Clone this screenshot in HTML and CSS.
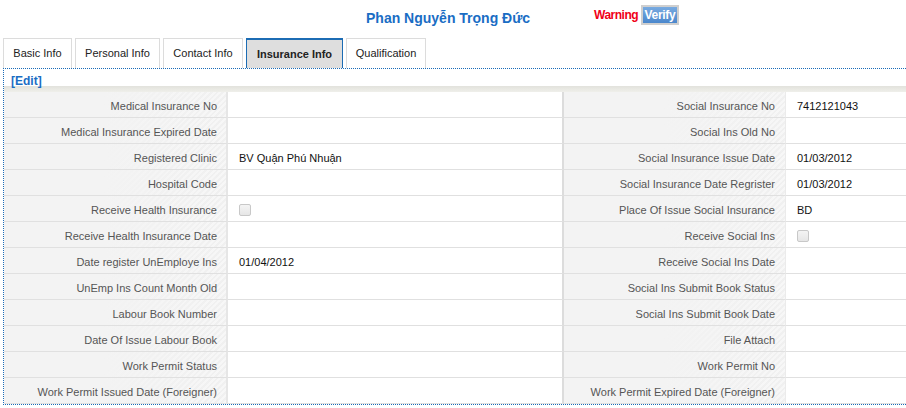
FILE: index.html
```html
<!DOCTYPE html>
<html>
<head>
<meta charset="utf-8">
<link rel="stylesheet" href="styles.css">
</head>
<body>
<div class="header">
  <div class="title">Phan Nguyễn Trọng Đức</div>
  <div class="warn">Warning</div>
  <div class="verify">Verify</div>
</div>
<div class="tabs">
  <div class="tab t-basic">Basic Info</div>
  <div class="tab t-personal">Personal Info</div>
  <div class="tab t-contact">Contact Info</div>
  <div class="tab t-insurance active">Insurance Info</div>
  <div class="tab t-qual">Qualification</div>
</div>
<div class="panel">
  <div class="edit">[Edit]</div>
  <div class="bar"></div>
  <div class="grid">
    <div class="lbl">Medical Insurance No</div><div class="val v1"></div><div class="lbl l2">Social Insurance No</div><div class="val">7412121043</div>
    <div class="lbl">Medical Insurance Expired Date</div><div class="val v1"></div><div class="lbl l2">Social Ins Old No</div><div class="val"></div>
    <div class="lbl">Registered Clinic</div><div class="val v1">BV Quận Phú Nhuận</div><div class="lbl l2">Social Insurance Issue Date</div><div class="val">01/03/2012</div>
    <div class="lbl">Hospital Code</div><div class="val v1"></div><div class="lbl l2">Social Insurance Date Regrister</div><div class="val">01/03/2012</div>
    <div class="lbl">Receive Health Insurance</div><div class="val v1"><span class="chk"></span></div><div class="lbl l2">Place Of Issue Social Insurance</div><div class="val">BD</div>
    <div class="lbl">Receive Health Insurance Date</div><div class="val v1"></div><div class="lbl l2">Receive Social Ins</div><div class="val"><span class="chk"></span></div>
    <div class="lbl">Date register UnEmploye Ins</div><div class="val v1">01/04/2012</div><div class="lbl l2">Receive Social Ins Date</div><div class="val"></div>
    <div class="lbl">UnEmp Ins Count Month Old</div><div class="val v1"></div><div class="lbl l2">Social Ins Submit Book Status</div><div class="val"></div>
    <div class="lbl">Labour Book Number</div><div class="val v1"></div><div class="lbl l2">Social Ins Submit Book Date</div><div class="val"></div>
    <div class="lbl">Date Of Issue Labour Book</div><div class="val v1"></div><div class="lbl l2">File Attach</div><div class="val"></div>
    <div class="lbl">Work Permit Status</div><div class="val v1"></div><div class="lbl l2">Work Permit No</div><div class="val"></div>
    <div class="lbl">Work Permit Issued Date (Foreigner)</div><div class="val v1"></div><div class="lbl l2">Work Permit Expired Date (Foreigner)</div><div class="val"></div>
  </div>
</div>
</body>
</html>
```

FILE: styles.css
```css
html, body {
  margin: 0;
  padding: 0;
  background: #fff;
  overflow: hidden;
  font-family: "Liberation Sans", Arial, sans-serif;
  font-size: 11px;
  color: #222;
}
.header {
  height: 38px;
  display: flex;
  align-items: flex-start;
  padding-left: 366px;
  box-sizing: border-box;
}
.title {
  margin-top: 10px;
  font-size: 14px;
  font-weight: bold;
  color: #1a6dc4;
  width: 228px;
}
.warn {
  margin-top: 8px;
  font-size: 12px;
  font-weight: bold;
  color: #f00018;
  letter-spacing: -0.5px;
  width: 47px;
}
.verify {
  margin-top: 5px;
  width: 34px;
  height: 16px;
  line-height: 16px;
  text-align: center;
  border: 2px solid #cfcfcf;
  background: linear-gradient(#78aae0, #4b87cc);
  color: #fff;
  font-weight: bold;
  font-size: 12px;
  letter-spacing: -0.3px;
}
.tabs {
  display: flex;
  gap: 3px;
  padding-left: 3px;
  height: 30px;
}
.tab {
  box-sizing: border-box;
  border: 1px solid #dcdcdc;
  border-bottom: none;
  text-align: center;
  line-height: 29px;
  color: #222;
  white-space: nowrap;
}
.t-basic { width: 69px; }
.t-personal { width: 85px; }
.t-contact { width: 80px; }
.t-insurance { width: 97px; }
.t-qual { width: 80px; }
.tab.active {
  background: #dedede;
  border: 1px solid #1c6cb4;
  border-top-width: 2px;
  border-bottom: none;
  line-height: 29px;
  font-weight: bold;
}
.panel {
  margin-left: 3px;
  width: 930px;
  border: 1px dotted #1a6cb8;
  border-right: none;
}
.edit {
  height: 17px;
  line-height: 24px;
  padding-left: 7px;
  color: #1a6dc4;
  font-weight: bold;
  font-size: 12px;
}
.bar {
  height: 6px;
  background: linear-gradient(#e2e2dc, #efefea);
}
.grid {
  display: grid;
  grid-template-columns: 224px 336px 222px 1fr;
}
.grid > div {
  height: 25px;
  line-height: 28px;
  border-bottom: 1px solid #e0e0e0;
  white-space: nowrap;
  overflow: hidden;
}
.lbl {
  text-align: right;
  padding-right: 9px;
  color: #555;
  background:
    linear-gradient(90deg, #f3f3f3 45%, rgba(243,243,243,0) 100%),
    repeating-linear-gradient(135deg, #f7f7f7 0 2px, #f0f0f0 2px 4px);
  border-right: 2px solid #e6e6e6;
}
.l2 {
  border-right: 1px solid #ebebeb;
  padding-right: 10px;
}
.val {
  padding-left: 11px;
  color: #111;
}
.v1 {
  border-right: 2px solid #dcdcdc;
}
.chk {
  display: inline-block;
  width: 10px;
  height: 10px;
  border: 1px solid #c8c8c8;
  border-radius: 2px;
  background: linear-gradient(#f4f4f4, #e6e6e6);
  vertical-align: middle;
  margin-top: -3px;
}
```
